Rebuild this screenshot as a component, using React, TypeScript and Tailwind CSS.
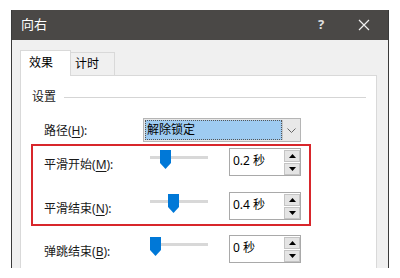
import React from 'react'

const font = { fontFamily: '"Noto Sans", "Noto Sans CJK SC", sans-serif' }

function Thumb() {
  return (
    <svg width="11" height="19" viewBox="0 0 11 19" className="block">
      <path d="M0 0 H11 V13 L5.5 19 L0 13 Z" fill="#0078d7" />
    </svg>
  )
}

function Slider({ pos }: { pos: number }) {
  return (
    <div className="relative w-[58px] h-[28px]">
      <div className="absolute left-0 right-0 top-[8px] h-[3px] bg-[#d8d8d8]" />
      <div className="absolute top-[2px]" style={{ left: pos }}>
        <Thumb />
      </div>
    </div>
  )
}

function SpinBox({ value }: { value: string }) {
  return (
    <div className="flex w-[72px] h-[28px] border border-[#a9a9a9] bg-white">
      <div className="flex-1 pl-[3px] pt-[3px] leading-[18px] text-[12px] text-black">{value}</div>
      <div className="flex flex-col gap-[1px] pt-[1px]">
        <div className="w-[16px] h-[12px] bg-[#e4e4e4] border border-[#c4c4c4] flex items-center justify-center">
          <svg width="7" height="4" viewBox="0 0 7 4"><path d="M3.5 0 L7 4 H0 Z" fill="#000" /></svg>
        </div>
        <div className="w-[16px] h-[12px] bg-[#e4e4e4] border border-[#c4c4c4] flex items-center justify-center">
          <svg width="7" height="4" viewBox="0 0 7 4"><path d="M0 0 H7 L3.5 4 Z" fill="#000" /></svg>
        </div>
      </div>
    </div>
  )
}

function Label({ text, k, w }: { text: string; k: string; w: number }) {
  return (
    <div className="flex items-center h-[28px] pt-[6px] text-[12px] text-[#1a1a1a]" style={{ width: w }}>
      {text}(<span className="underline underline-offset-2">{k}</span>):
    </div>
  )
}

export default function App() {
  return (
    <div className="w-[400px] h-[278px] bg-white pt-[10px] pl-[11px]" style={font}>
      <div className="w-[378px] h-[258px] flex flex-col border-x border-[#3a3a3a]">
        {/* Title bar */}
        <div className="h-[30px] bg-[#4a4846] flex items-center pl-[9px] text-[13px] text-white">
          <span className="flex-1">向右</span>
          <span className="w-[20px] text-center font-bold text-[13px] text-[#e0e0e0] mr-[27px]">?</span>
          <svg width="12" height="12" viewBox="0 0 12 12" className="mr-[18px]">
            <path d="M1 1 L11 11 M11 1 L1 11" stroke="#f0f0f0" strokeWidth="1.2" />
          </svg>
        </div>

        {/* Body */}
        <div className="flex-1 bg-[#f0f0f0] pl-[8px] pr-[11px] pt-[10px] flex flex-col">
          <div className="flex items-end h-[26px]">
            <div className="w-[51px] h-[26px] bg-white border border-b-0 border-[#d9d9d9] pl-[8px] pt-[3px] text-[12px] text-black relative z-10">效果</div>
            <div className="w-[44px] h-[23px] bg-[#f0f0f0] border border-l-0 border-b-0 border-[#d9d9d9] pl-[4px] pt-[2px] text-[12px] text-black mb-[1px]">计时</div>
          </div>
          <div className="flex-1 bg-white border border-b-0 border-[#d9d9d9] -mt-[1px] pt-[11px] flex flex-col">
            {/* Group header */}
            <div className="flex items-center h-[20px] ml-[11px] mr-[10px] text-[12px] text-[#1a1a1a]">
              <span>设置</span>
              <div className="flex-1 h-px bg-[#d5d5d5] ml-[8px]" />
            </div>

            {/* Path row */}
            <div className="flex items-center mt-[11px] h-[24px] pl-[23px]">
              <div className="w-[99px] text-[12px] text-[#1a1a1a] pt-[2px]">
                路径(<span className="underline underline-offset-2">H</span>):
              </div>
              <div className="flex w-[158px] h-[24px] border border-[#b5b5b5] bg-[#e8e8e8] p-[1px]">
                <div className="flex-1 bg-[#9ecbf1] border border-dotted border-[#555] text-[12px] text-black pl-[1px] leading-[18px]">解除锁定</div>
                <div className="w-[17px] flex items-center justify-center border-l border-[#c8c8c8]">
                  <svg width="9" height="5" viewBox="0 0 9 5"><path d="M0.5 0.5 L4.5 4.5 L8.5 0.5" stroke="#666" fill="none" /></svg>
                </div>
              </div>
            </div>

            {/* Red highlight */}
            <div className="ml-[10px] mt-[2px] w-[280px] h-[82px] border-2 border-[#d8262b] pl-[11px] pt-[2px] flex flex-col gap-[16px]">
              <div className="flex items-start h-[28px]">
                <Label text="平滑开始" k="M" w={106} />
                <Slider pos={10} />
                <div className="ml-[21px]"><SpinBox value="0.2 秒" /></div>
              </div>
              <div className="flex items-start h-[28px]">
                <Label text="平滑结束" k="N" w={106} />
                <Slider pos={18} />
                <div className="ml-[21px]"><SpinBox value="0.4 秒" /></div>
              </div>
            </div>

            {/* Bounce row */}
            <div className="flex items-start h-[28px] mt-[9px] pl-[23px]">
              <Label text="弹跳结束" k="B" w={106} />
              <Slider pos={0} />
              <div className="ml-[21px]"><SpinBox value="0 秒" /></div>
            </div>
          </div>
        </div>
      </div>
    </div>
  )
}
